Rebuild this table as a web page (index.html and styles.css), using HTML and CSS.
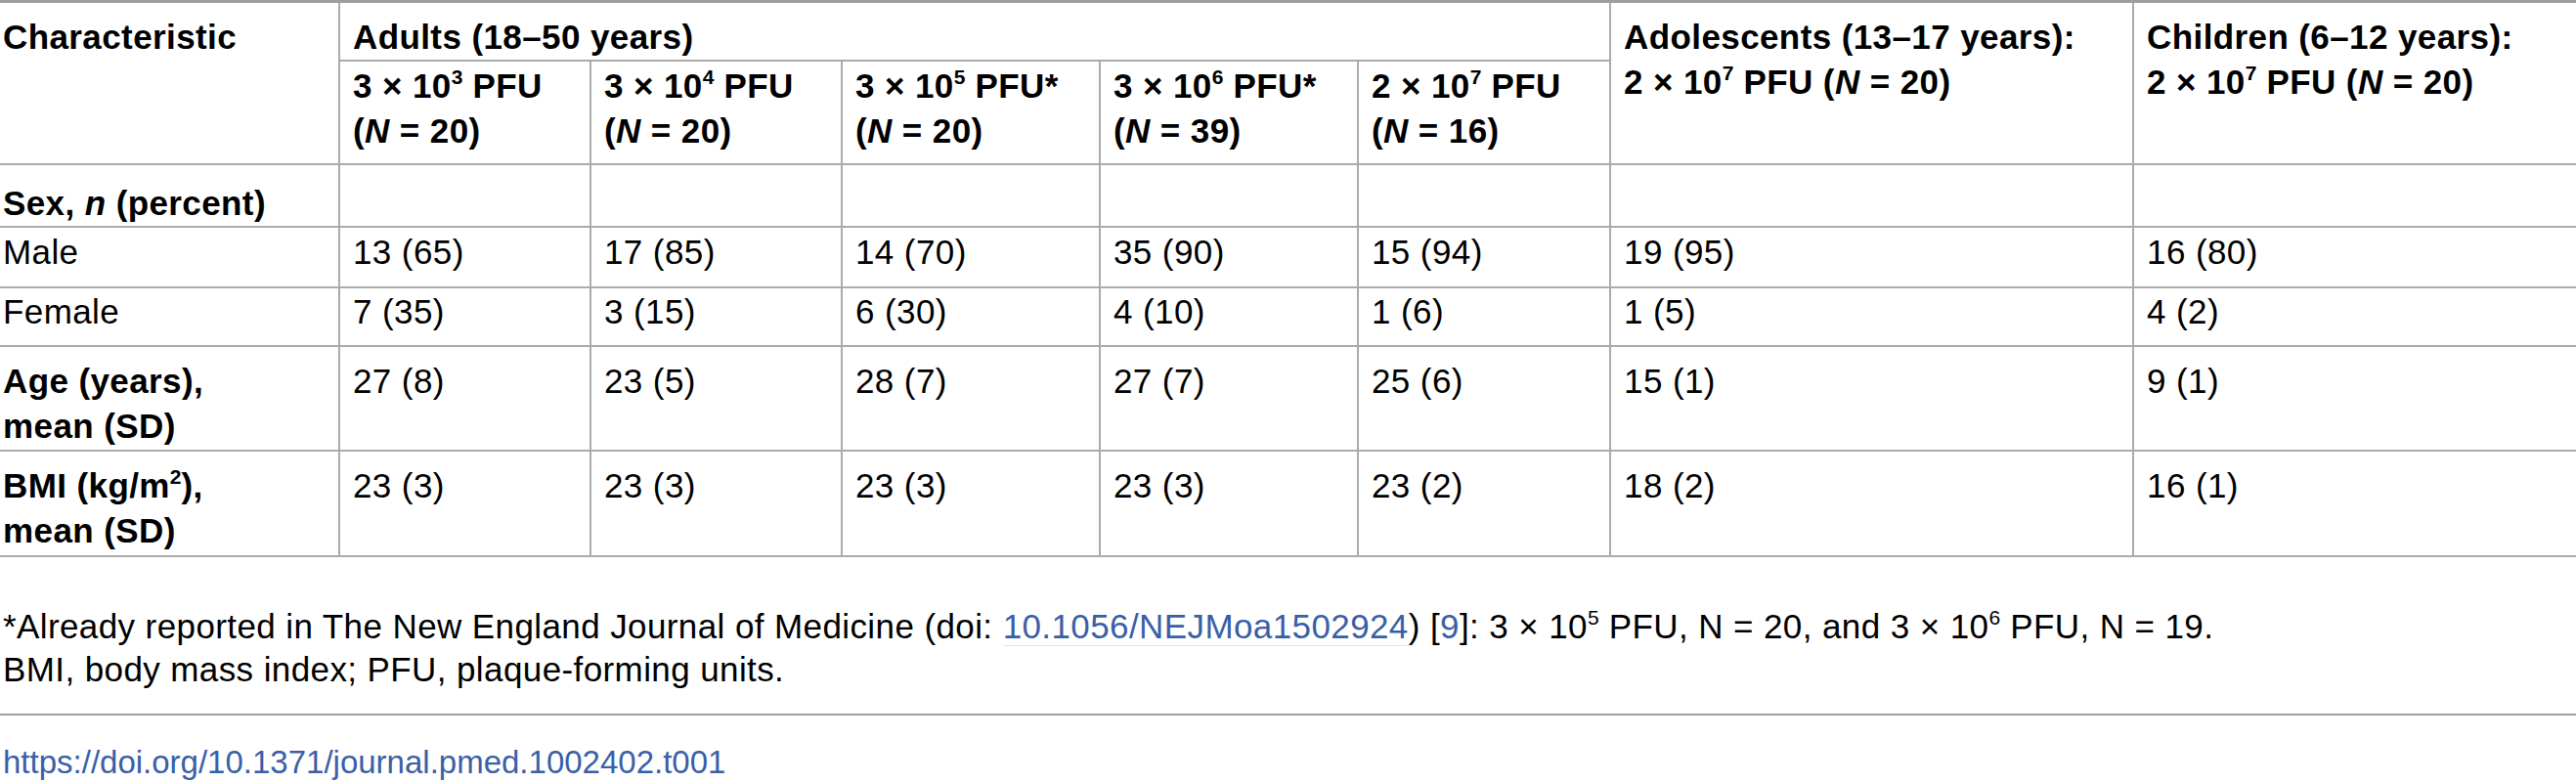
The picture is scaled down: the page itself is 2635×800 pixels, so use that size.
FILE: index.html
```html
<!DOCTYPE html>
<html lang="en">
<head>
<meta charset="utf-8">
<title>Table 1</title>
<link rel="stylesheet" href="styles.css">
</head>
<body>
<div class="figure">
  <table class="data">
    <colgroup>
      <col class="c0"><col class="c1"><col class="c2"><col class="c3"><col class="c4"><col class="c5"><col class="c6"><col class="c7">
    </colgroup>
    <thead>
      <tr class="h1">
        <th rowspan="2" class="lab">Characteristic</th>
        <th colspan="5">Adults (18–50 years)</th>
        <th rowspan="2">Adolescents (13–17 years):<br>2 × 10<sup>7</sup> PFU (<i>N</i> = 20)</th>
        <th rowspan="2">Children (6–12 years):<br>2 × 10<sup>7</sup> PFU (<i>N</i> = 20)</th>
      </tr>
      <tr class="h2">
        <th>3 × 10<sup>3</sup> PFU<br>(<i>N</i> = 20)</th>
        <th>3 × 10<sup>4</sup> PFU<br>(<i>N</i> = 20)</th>
        <th>3 × 10<sup>5</sup> PFU*<br>(<i>N</i> = 20)</th>
        <th>3 × 10<sup>6</sup> PFU*<br>(<i>N</i> = 39)</th>
        <th>2 × 10<sup>7</sup> PFU<br>(<i>N</i> = 16)</th>
      </tr>
    </thead>
    <tbody>
      <tr class="r-sex">
        <th class="lab">Sex, <i>n</i> (percent)</th>
        <td></td><td></td><td></td><td></td><td></td><td></td><td></td>
      </tr>
      <tr class="r-male">
        <td class="lab">Male</td>
        <td>13 (65)</td><td>17 (85)</td><td>14 (70)</td><td>35 (90)</td><td>15 (94)</td><td>19 (95)</td><td>16 (80)</td>
      </tr>
      <tr class="r-female">
        <td class="lab">Female</td>
        <td>7 (35)</td><td>3 (15)</td><td>6 (30)</td><td>4 (10)</td><td>1 (6)</td><td>1 (5)</td><td>4 (2)</td>
      </tr>
      <tr class="r-age">
        <th class="lab">Age (years),<br>mean (SD)</th>
        <td>27 (8)</td><td>23 (5)</td><td>28 (7)</td><td>27 (7)</td><td>25 (6)</td><td>15 (1)</td><td>9 (1)</td>
      </tr>
      <tr class="r-bmi">
        <th class="lab">BMI (kg/m<sup>2</sup>),<br>mean (SD)</th>
        <td>23 (3)</td><td>23 (3)</td><td>23 (3)</td><td>23 (3)</td><td>23 (2)</td><td>18 (2)</td><td>16 (1)</td>
      </tr>
    </tbody>
  </table>

  <div class="notes">
    <p>*Already reported in The New England Journal of Medicine (doi: <a class="link ref" href="#">10.1056/NEJMoa1502924</a>) [<a class="link" href="#">9</a>]: 3 × 10<sup>5</sup> PFU, N = 20, and 3 × 10<sup>6</sup> PFU, N = 19.</p>
    <p>BMI, body mass index; PFU, plaque-forming units.</p>
  </div>
  <div class="rule"></div>
  <div class="doi"><a class="link" href="#">https://doi.org/10.1371/journal.pmed.1002402.t001</a></div>
</div>
</body>
</html>
```

FILE: styles.css
```css
html, body {
  margin: 0;
  padding: 0;
  background: #ffffff;
}

body {
  font-family: "Liberation Sans", Arial, Helvetica, sans-serif;
  font-size: 35px;
  letter-spacing: 0.4px;
  color: #000000;
}

.figure {
  width: 2635px;
}

.data {
  width: 2635px;
  table-layout: fixed;
  border-collapse: separate;
  border-spacing: 0;
  border-top: 3px solid #9e9e9e;
}

.c0 { width: 346px; }
.c1 { width: 257px; }
.c2 { width: 257px; }
.c3 { width: 264px; }
.c4 { width: 264px; }
.c5 { width: 258px; }
.c6 { width: 535px; }
.c7 { width: 454px; }

.data th,
.data td {
  box-sizing: border-box;
  padding: 0 8px 0 13px;
  border-bottom: 2px solid #ababab;
  border-left: 2px solid #ababab;
  text-align: left;
  vertical-align: top;
  line-height: 46px;
  font-weight: normal;
  white-space: nowrap;
}

.data th {
  font-weight: bold;
}

.data .lab {
  border-left: none;
  padding-left: 3px;
}

sup {
  font-size: 60%;
  line-height: 0;
  vertical-align: 14px;
  letter-spacing: 0;
}

.h1 { height: 60px; }
.h1 th { padding-top: 12px; }

.h2 { height: 106px; }
.h2 th { padding-top: 2px; }

.r-sex { height: 62px; }
.r-sex th, .r-sex td { padding-top: 16px; }

.r-male { height: 62px; }
.r-male td { padding-top: 2px; }

.r-female { height: 60px; }
.r-female td { padding-top: 1px; }

.r-age { height: 107px; }
.r-age th, .r-age td { padding-top: 12px; }

.r-bmi { height: 108px; }
.r-bmi th, .r-bmi td { padding-top: 12px; }

.notes {
  margin-top: 49px;
  line-height: 44px;
}

.notes p {
  margin: 0;
  padding-left: 3px;
  white-space: nowrap;
}

.rule {
  margin-top: 23px;
  border-top: 2px solid #9e9e9e;
}

.doi {
  margin-top: 25px;
  padding-left: 3px;
  line-height: 46px;
  font-size: 33px;
  letter-spacing: 0;
}

.link {
  color: #3a5fa8;
  text-decoration: none;
}

.link.ref {
  border-bottom: 1px solid #e2e7ef;
}
```
